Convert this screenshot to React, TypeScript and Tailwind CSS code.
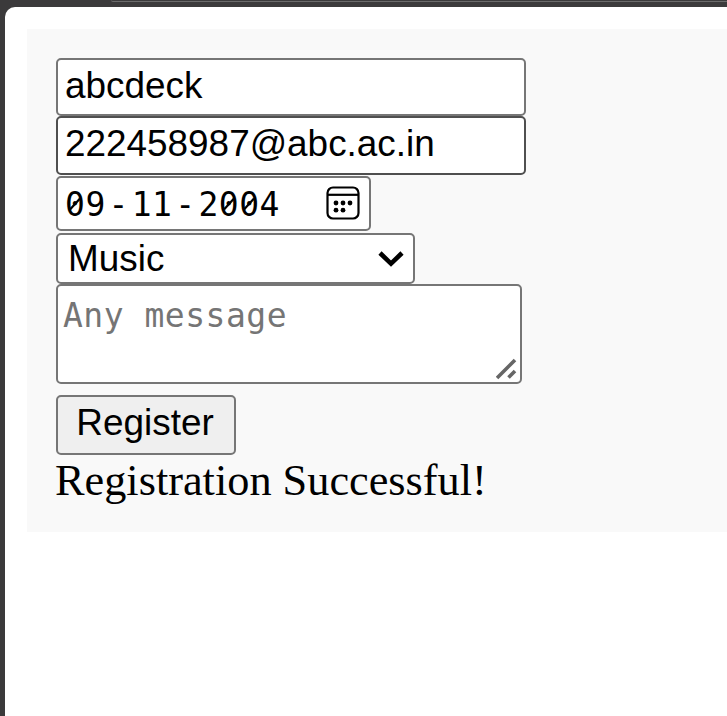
import React from "react";

const sans = "font-['Liberation_Sans',Arial,sans-serif] text-[36.9px]";
const mono = "font-['DejaVu_Sans_Mono',monospace] text-[33px] tracking-[0.5px]";
const box = "box-border block rounded-[5px] border-2 bg-white outline-none";

function CalendarIcon() {
  return (
    <svg className="mb-[2px] h-[34px] w-[34px]" viewBox="0 0 34 34" fill="none" aria-hidden="true">
      <rect x="1.5" y="1.5" width="31" height="31" rx="5.5" stroke="#000" strokeWidth="2.2" />
      <path d="M2 8.8H32" stroke="#000" strokeWidth="2.2" />
      <g fill="#000">
        <circle cx="10" cy="17" r="2.4" />
        <circle cx="17" cy="17" r="2.4" />
        <circle cx="24" cy="17" r="2.4" />
        <circle cx="10" cy="24.2" r="2.4" />
        <circle cx="17" cy="24.2" r="2.4" />
      </g>
    </svg>
  );
}

function Chevron() {
  return (
    <svg className="mt-px h-4 w-[26px]" viewBox="0 0 26 16" fill="none" aria-hidden="true">
      <path d="M2 2L13 12.6L24 2" stroke="#000" strokeWidth="4.6" />
    </svg>
  );
}

function Zero() {
  return (
    <span className="relative">
      0
      <svg className="absolute left-[3px] top-[9px] h-[20px] w-[14px]" viewBox="0 0 14 20" fill="none" aria-hidden="true">
        <path d="M2 15.5L12 4.5" stroke="#000" strokeWidth="2.2" />
      </svg>
    </span>
  );
}

function DateField() {
  return (
    <div className={`${box} ${mono} flex h-[55px] w-[315px] items-center justify-between border-[#767676] pl-[7px] pr-[9px] text-black`}>
      <div className="flex pt-[2px] leading-[50px]">
        <span><Zero />9</span>
        <span className="mx-[2.8px]">-</span>
        <span>11</span>
        <span className="mx-[2.8px]">-</span>
        <span>2<Zero /><Zero />4</span>
      </div>
      <CalendarIcon />
    </div>
  );
}

export default function App() {
  return (
    <div className="h-[716px] w-full overflow-hidden bg-[#3b3a3b]">
      <div className="ml-[111px] h-[2px] rounded-bl-[5px] border-b border-[#6b6b6b]" />
      <main className="ml-[5px] mt-[5px] h-[709px] rounded-tl-[10px] bg-white pl-[22px] pt-[22px]">
        <form className="h-[503px] bg-[#f9f9f9] pl-[29px] pt-[29px]" onSubmit={(e) => e.preventDefault()}>
          <input
            type="text"
            aria-label="Name"
            defaultValue="abcdeck"
            className={`${box} ${sans} h-[58px] w-[470px] border-[#767676] pb-[3px] pl-[7px] text-black`}
          />
          <input
            type="text"
            aria-label="Email"
            defaultValue="222458987@abc.ac.in"
            className={`${box} ${sans} mb-px h-[59px] w-[470px] border-[#4f4f4f] pb-[3px] pl-[7px] text-black`}
          />
          <DateField />
          <div className={`${box} ${sans} mt-[2px] flex h-[51px] w-[359px] items-center justify-between border-[#767676] pl-[10px] pr-[9px] leading-[47px] text-black`}>
            <span>Music</span>
            <Chevron />
          </div>
          <div className="relative w-[466px]">
            <textarea
              aria-label="Message"
              placeholder="Any message"
              className={`${box} ${mono} h-[100px] w-full resize-none overflow-hidden border-[#767676] px-[5px] py-[8px] leading-[44px] placeholder:text-[#757575]`}
            />
            <svg className="absolute bottom-[4px] right-[4px] h-[22px] w-[22px]" viewBox="0 0 22 22" aria-hidden="true">
              <path d="M1 20L19 2M12.5 19.5L19 13" fill="none" stroke="#666" strokeWidth="3.6" />
            </svg>
          </div>
          <button
            type="submit"
            className={`${sans} mt-[11px] flex h-[60px] w-[180px] items-center justify-center rounded-[5px] border-2 border-[#767676] bg-[#efefef] pb-[4px] pr-[2px] text-black`}
          >
            Register
          </button>
          <p className="-ml-px font-['Liberation_Serif','Times_New_Roman',serif] text-[44.3px] leading-[52px] text-black">
            Registration Successful!
          </p>
        </form>
      </main>
    </div>
  );
}
